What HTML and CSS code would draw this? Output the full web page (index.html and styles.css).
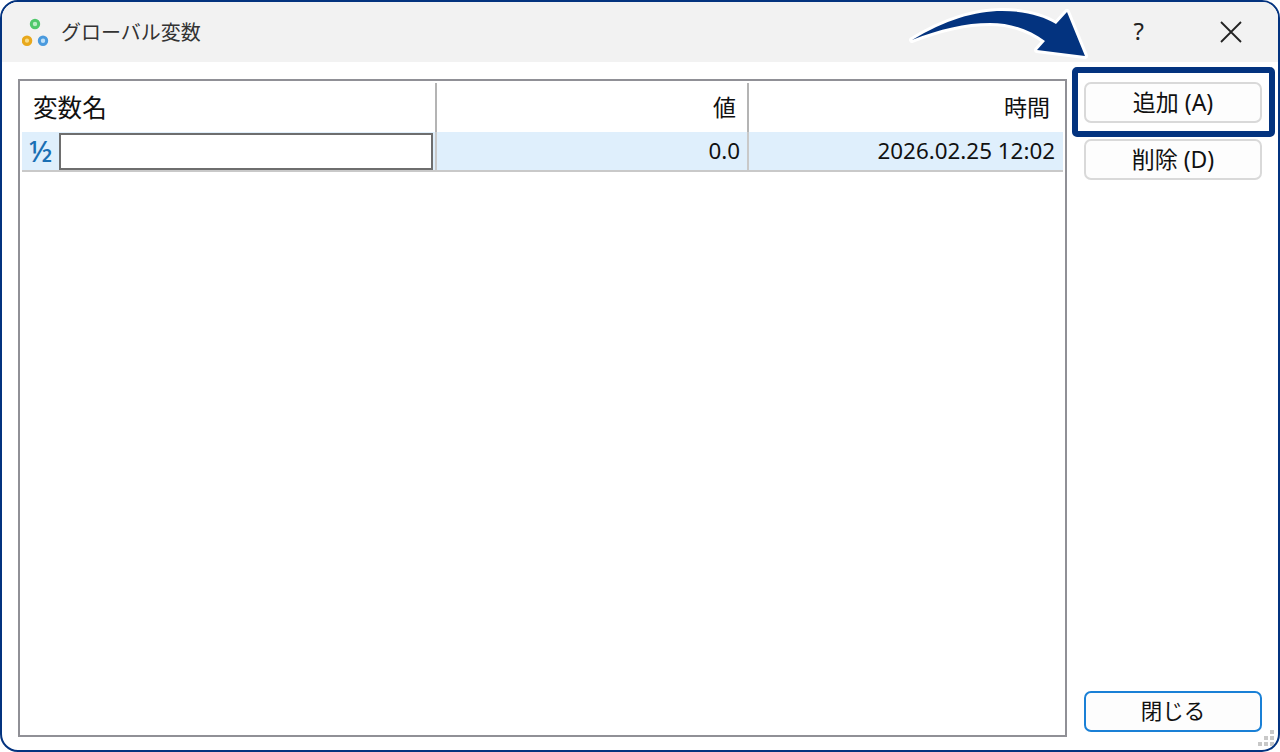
FILE: index.html
```html
<!DOCTYPE html>
<html lang="ja">
<head>
<meta charset="utf-8">
<title>グローバル変数</title>
<link rel="stylesheet" href="styles.css">
</head>
<body>
<div class="window">
  <header class="titlebar">
    <svg class="app-icon" width="28" height="30" viewBox="0 0 28 30">
      <circle cx="13" cy="7" r="3.7" fill="#b9ecc4" stroke="#4fc86a" stroke-width="3"/>
      <circle cx="5" cy="23.7" r="3.7" fill="#f8dd8a" stroke="#e8a81c" stroke-width="3.2"/>
      <circle cx="21" cy="23.7" r="3.7" fill="#bfe0f8" stroke="#4a9ade" stroke-width="3"/>
    </svg>
    <span class="title">グローバル変数</span>
    <span class="help">?</span>
    <svg class="close-x" width="22" height="22" viewBox="0 0 22 22">
      <path d="M1 1 L21 21 M21 1 L1 21" stroke="#222" stroke-width="1.8" fill="none"/>
    </svg>
  </header>
  <main class="content">
    <section class="table">
      <div class="head">
        <div class="col col-name head-name">変数名</div>
        <div class="col col-value">値</div>
        <div class="col col-time">時間</div>
      </div>
      <div class="row">
        <div class="cell-name">
          <span class="frac">½</span>
          <input class="name-input" type="text" value="">
        </div>
        <div class="cell cell-value">0.0</div>
        <div class="cell cell-time">2026.02.25 12:02</div>
      </div>
    </section>
    <aside class="side">
      <button class="btn">追加 (A)</button>
      <button class="btn">削除 (D)</button>
      <button class="btn btn-default">閉じる</button>
    </aside>
  </main>
  <div class="grip"><i></i><i></i><i></i><i></i><i></i><i></i></div>
</div>
<div class="callout"></div>
<svg class="arrow" width="200" height="70" viewBox="900 0 200 70">
  <path d="M912 40 C945 20 975 11 1002 11 C1025 11 1043 16 1056 24 L1067 12 L1085 56 L1037 50 L1045 41 C1030 30 1012 23 990 23 C965 23 940 29 912 40 Z" fill="#03337f" stroke="#fff" stroke-width="6" stroke-linejoin="round" paint-order="stroke"/>
</svg>
</body>
</html>
```
FILE: styles.css
```css
* { box-sizing: border-box; }
html, body { margin: 0; padding: 0; background: #fff; }
body {
  position: relative;
  width: 1280px;
  height: 752px;
  overflow: hidden;
  font-family: "Noto Sans", "Noto Sans CJK JP", sans-serif;
  color: #111;
}
.window {
  position: relative;
  width: 1280px;
  height: 752px;
  border: 2px solid #03337f;
  border-radius: 18px;
  background: #fff;
  overflow: hidden;
  display: flex;
  flex-direction: column;
}
.titlebar {
  height: 60px;
  flex: none;
  background: #f2f2f2;
  display: flex;
  align-items: center;
  padding: 0 36px 0 20px;
}
.app-icon { flex: none; }
.title {
  margin-left: 11px;
  padding-bottom: 2px;
  font-size: 20px;
  color: #333;
  font-family: "Noto Sans CJK JP", sans-serif;
}
.help {
  margin-left: auto;
  margin-right: 76px;
  padding-bottom: 3px;
  font-size: 24px;
  color: #222;
}
.close-x { flex: none; }
.content {
  flex: 1;
  min-height: 0;
  display: flex;
  gap: 17px;
  padding: 17px 16px 13px 16px;
}
.table {
  width: 1049px;
  border: 2px solid #909096;
  padding: 0 2px 0 2px;
  display: flex;
  flex-direction: column;
}
.head {
  height: 51px;
  display: flex;
  flex: none;
  padding-top: 2px;
}
.col {
  display: flex;
  align-items: center;
  justify-content: flex-end;
  font-size: 23px;
  font-family: "Noto Sans CJK JP", sans-serif;
  color: #111;
  border-right: 2px solid #b4b4b4;
  padding-bottom: 4px;
}
.col-name { width: 415px; justify-content: flex-start; padding-left: 11px; font-size: 24.6px; }
.col-value { width: 312px; padding-right: 11px; }
.col-time { flex: 1; border-right: none; padding-right: 13px; }
.row {
  height: 40px;
  flex: none;
  display: flex;
  background: #dfeffc;
  border-bottom: 2px solid #c9c9c9;
}
.cell-name {
  width: 415px;
  display: flex;
  align-items: flex-end;
  padding-right: 2px;
  border-right: 2px solid #c9c9c9;
}
.frac {
  width: 37px;
  flex: none;
  height: 37px;
  line-height: 36px;
  text-align: center;
  font-size: 29px;
  font-weight: 500;
  color: #1a6fb4;
}
.name-input {
  flex: 1;
  min-width: 0;
  height: 37px;
  border: 2px solid #6e6e6e;
  background: #fff;
  padding: 0;
  margin: 0;
  outline: none;
  border-radius: 0;
}
.cell {
  display: flex;
  align-items: center;
  justify-content: flex-end;
  font-size: 22.4px;
  color: #111;
  padding-bottom: 2px;
}
.cell-value { width: 312px; padding-right: 7px; border-right: 2px solid #c9c9c9; }
.cell-time { flex: 1; padding-right: 8px; }
.side {
  width: 178px;
  display: flex;
  flex-direction: column;
  gap: 16px;
  padding: 3px 0 5px;
}
.btn {
  height: 41px;
  flex: none;
  border: 2px solid #d9d9d9;
  border-radius: 7px;
  background: #fdfdfd;
  font-family: "Noto Sans", "Noto Sans CJK JP", sans-serif;
  font-size: 23px;
  color: #111;
  padding: 0 0 4px;
}
.btn-default {
  margin-top: auto;
  border-color: #1a80d6;
  font-size: 21.5px;
}
.grip {
  position: absolute;
  right: 2px;
  bottom: 2px;
  width: 18px;
  height: 18px;
  display: grid;
  grid-template-columns: repeat(3, 6px);
  grid-template-rows: repeat(3, 6px);
}
.grip i { width: 4px; height: 4px; background: #c8c8c8; }
.grip i:nth-child(1) { grid-area: 1 / 3; }
.grip i:nth-child(2) { grid-area: 2 / 2; }
.grip i:nth-child(3) { grid-area: 2 / 3; }
.grip i:nth-child(4) { grid-area: 3 / 1; }
.grip i:nth-child(5) { grid-area: 3 / 2; }
.grip i:nth-child(6) { grid-area: 3 / 3; }
.callout {
  position: absolute;
  left: 1072px;
  top: 67px;
  width: 203px;
  height: 70px;
  border: 6px solid #03337f;
  border-radius: 5px;
}
.arrow {
  position: absolute;
  left: 900px;
  top: 0;
}
```
